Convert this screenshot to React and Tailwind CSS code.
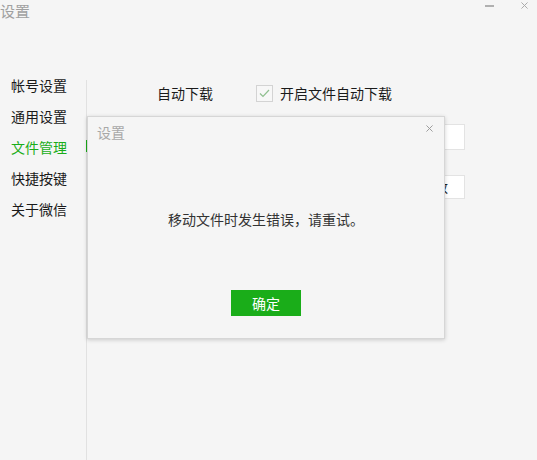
import React from "react";

const menu = ["帐号设置", "通用设置", "文件管理", "快捷按键", "关于微信"];

function CloseIcon({ size = 8, color = "#9a9a9a" }) {
  return (
    <svg width={size} height={size} viewBox="0 0 8 8">
      <path d="M0.5 0.5L7.5 7.5M7.5 0.5L0.5 7.5" stroke={color} strokeWidth="1.1" />
    </svg>
  );
}

function ErrorDialog() {
  return (
    <div className="absolute left-[87px] top-[116px] w-[358px] h-[223px] bg-[#f5f5f5] border border-[#d6d6d6] shadow-[0_1px_4px_rgba(0,0,0,0.18)] flex flex-col">
      <div className="relative h-[30px] leading-[30px] pl-[9px] text-[14px] text-[#a8a8a8]">
        设置
        <div className="absolute left-[338px] top-[8px]">
          <CloseIcon size={7} />
        </div>
      </div>
      <div className="mt-[62px] leading-[20px] text-[14px] text-[#333] text-center">
        移动文件时发生错误，请重试。
      </div>
      <button className="mt-[61px] self-center w-[70px] h-[26px] bg-[#1aad19] text-white text-[14px] leading-[26px]">
        确定
      </button>
    </div>
  );
}

export default function App() {
  return (
    <div
      className="relative w-[537px] h-[460px] bg-[#f5f5f5] overflow-hidden"
      style={{ fontFamily: '"Noto Sans CJK SC", "Noto Sans", sans-serif' }}
    >
      <div className="flex items-start h-[22px]">
        <span className="mt-[1px] text-[15px] leading-[20px] text-[#a0a0a0]">设置</span>
        <div className="ml-auto flex items-start">
          <div className="mt-[5px] w-[9px] h-[2px] bg-[#b0b0b0]" />
          <div className="ml-[27px] mr-[9px] mt-[2px]">
            <CloseIcon size={7} color="#a8a8a8" />
          </div>
        </div>
      </div>

      <div className="flex">
        <div className="w-[86px] pt-[48px] flex flex-col">
          {menu.map((m, i) => (
            <div
              key={m}
              className={`h-[31px] leading-[31px] pl-[11px] text-[14px] ${
                i === 2 ? "text-[#1aad19]" : "text-[#1a1a1a]"
              }`}
            >
              {m}
            </div>
          ))}
        </div>

        <div className="relative flex-1 mt-[58px] h-[380px] border-l border-[#e1e1e1] flex flex-col">
          <div className="absolute left-[-1px] top-[60px] w-[2px] h-[12px] bg-[#1aad19]" />

          <div className="mt-[5px] h-[16px] flex items-center pl-[70px]">
            <span className="w-[99px] text-[14px] text-[#1a1a1a] leading-[16px]">自动下载</span>
            <div className="w-[17px] h-[17px] border border-[#d3d3d3] bg-[#f7f7f7] flex items-center justify-center">
              <svg width="11" height="9" viewBox="0 0 11 9">
                <path d="M1 4.5L4 7.5L10 1" fill="none" stroke="#8fbf8f" strokeWidth="1.2" />
              </svg>
            </div>
            <span className="ml-[7px] text-[14px] text-[#1a1a1a] leading-[16px]">开启文件自动下载</span>
          </div>

          <div className="mt-[23px] self-end mr-[72px] w-[170px] h-[26px] bg-white border border-[#e3e3e3]" />

          <button className="mt-[25px] self-end mr-[72px] w-[60px] h-[24px] bg-white border border-[#e3e3e3] text-[13px] text-[#222] leading-[22px]">
            更改
          </button>
        </div>
      </div>

      <ErrorDialog />
    </div>
  );
}
